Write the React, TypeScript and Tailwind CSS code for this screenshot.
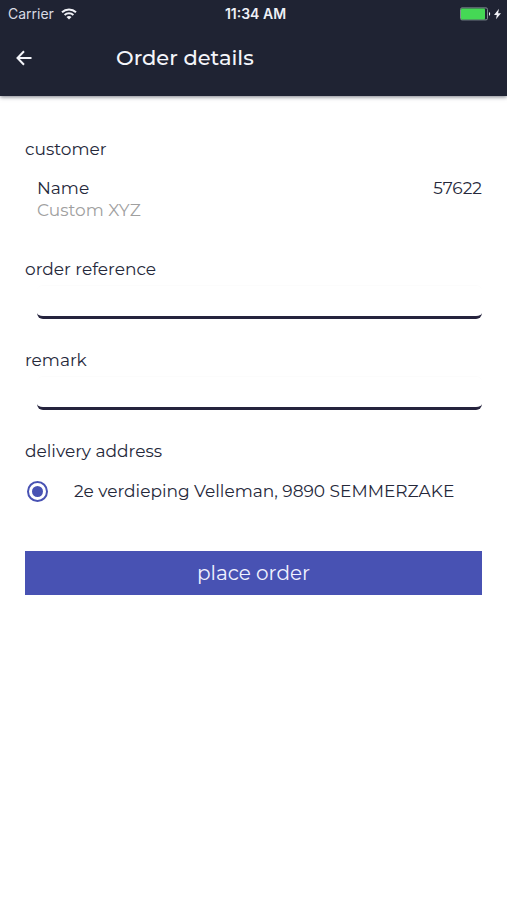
import { useState } from "react"

function StatusBar() {
  return (
    <div className="grid grid-cols-3 items-center h-7 pl-2 pr-1 font-['Inter',sans-serif] text-sm leading-5">
      <div className="flex items-center gap-1.5 text-[#d9dbe4]">
        <span>Carrier</span>
        {/* Wifi */}
        <svg width="18" height="14" viewBox="0 0 18 14" fill="none" stroke="#f1f2f7" strokeWidth="2" aria-hidden="true">
          <path d="M2 5.2A10.2 10.2 0 0 1 16 5.2" />
          <path d="M4.6 8.1A6.4 6.4 0 0 1 13.4 8.1" />
          <path d="M9 12.6 6.5 10.1A3.6 3.6 0 0 1 11.5 10.1Z" fill="#f1f2f7" stroke="none" />
        </svg>
      </div>
      <div className="text-center font-semibold text-[#eef0f6]">11:34 AM</div>
      <div className="flex items-center justify-end">
        {/* Battery, charging */}
        <svg width="43" height="14" viewBox="0 0 43 14" aria-hidden="true">
          <rect x="0.5" y="0.9" width="27" height="12" rx="1.5" fill="none" stroke="#7f8b91" />
          <rect x="1" y="1.4" width="24" height="11" rx="1" fill="#45d855" />
          <path d="M29 5.1c1.6.6 1.6 3.2 0 3.8z" fill="#f1f2f7" />
          <path d="M39 1.8 34 7.9h2.8L36 12.2l5-6h-2.9z" fill="#f1f2f7" />
        </svg>
      </div>
    </div>
  )
}

export default function OrderDetails() {
  const [reference, setReference] = useState("")
  const [remark, setRemark] = useState("")

  return (
    <div className="min-h-screen bg-white font-['Montserrat','Inter',sans-serif] text-[#25283a]">
      <header className="bg-[#1f2333] text-[#f4f5fa] shadow-[0_1px_4px_rgba(31,35,51,0.6)]">
        <StatusBar />
        <div className="flex items-center h-[68px] px-4 pb-2">
          <button type="button" aria-label="Back" className="w-[100px]">
            <svg width="16" height="16" viewBox="0 0 16 16" fill="none" stroke="currentColor" strokeWidth="2" aria-hidden="true">
              <path d="M15.5 8H2M8 1.3 1.5 8 8 14.7" />
            </svg>
          </button>
          <h1 className="text-[21px] leading-6 font-medium">Order details</h1>
        </div>
      </header>

      <main className="px-[25px] pt-[41px] text-[17px] leading-6">
        {/* Customer */}
        <section className="mb-9">
          <h2>customer</h2>
          <div className="mt-4 pl-3 flex justify-between leading-[22px]">
            <div>
              <p>Name</p>
              <p className="text-[#a0a0a0]">Custom XYZ</p>
            </div>
            <p>57622</p>
          </div>
        </section>

        <div className="mb-[29px]">
          <label htmlFor="reference" className="block">order reference</label>
          <div className="mt-1 pl-3">
            <input
              id="reference"
              type="text"
              value={reference}
              onChange={(e) => setReference(e.target.value)}
              className="block w-full h-[34px] px-2 rounded-md border-t border-t-[#fcfcfc] border-b-3 border-b-[#25233d] outline-none"
            />
          </div>
        </div>

        <div className="mb-[29px]">
          <label htmlFor="remark" className="block">remark</label>
          <div className="mt-1 pl-3">
            <input
              id="remark"
              type="text"
              value={remark}
              onChange={(e) => setRemark(e.target.value)}
              className="block w-full h-[34px] px-2 rounded-md border-t border-t-[#fcfcfc] border-b-3 border-b-[#25233d] outline-none"
            />
          </div>
        </div>

        {/* Delivery address */}
        <fieldset>
          <legend>delivery address</legend>
          <label className="mt-4 pl-[2px] flex items-center gap-[26px]">
            <input
              type="radio"
              name="address"
              defaultChecked
              className="appearance-none shrink-0 size-[21px] rounded-full border-2 border-[#4852b3] p-[3px] checked:bg-[#4852b3] bg-clip-content"
            />
            <span>2e verdieping Velleman, 9890 SEMMERZAKE</span>
          </label>
        </fieldset>

        <button type="button" className="mt-12 w-full h-11 bg-[#4852b3] text-[#f2f3ff] text-[20px] leading-6">
          place order
        </button>
      </main>
    </div>
  )
}
